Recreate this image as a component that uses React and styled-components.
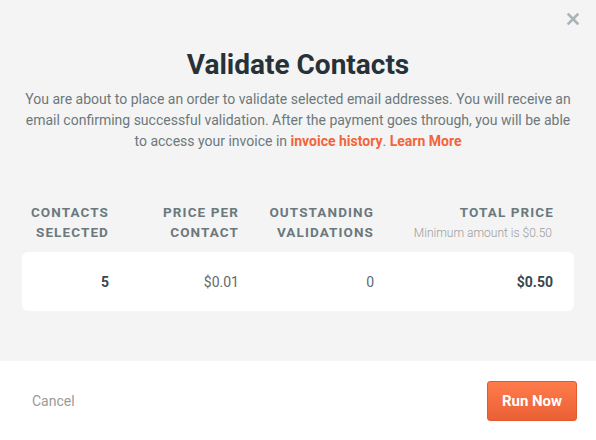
import React from "react";
import styled, { createGlobalStyle } from "styled-components";

const GlobalStyle = createGlobalStyle`
  html, body {
    margin: 0;
    padding: 0;
    background: #ffffff;
  }
  body {
    font-family: Roboto, "Liberation Sans", Arial, sans-serif;
  }
`;

const Modal = styled.div`
  width: 596px;
  height: 440px;
  display: flex;
  flex-direction: column;
  position: relative;
  overflow: hidden;
`;

const Body = styled.div`
  background: #f4f4f4;
  height: 361px;
  box-sizing: border-box;
  padding: 48px 22px 0;
  display: flex;
  flex-direction: column;
  align-items: stretch;
`;

const CloseButton = styled.button`
  position: absolute;
  top: 13px;
  right: 17px;
  width: 12px;
  height: 12px;
  padding: 0;
  border: 0;
  background: transparent;
  cursor: pointer;
  display: flex;
  color: #a9b4b7;
`;

const Title = styled.h1`
  margin: 0;
  font-size: 28px;
  line-height: 34px;
  font-weight: 700;
  color: #263238;
  text-align: center;
`;

const Description = styled.p`
  margin: 7px 0 0;
  font-size: 14px;
  line-height: 21px;
  color: #6d787b;
  text-align: center;
`;

const Link = styled.a`
  color: #f2643a;
  font-weight: 700;
  text-decoration: none;
`;

const Grid = styled.div`
  display: grid;
  grid-template-columns: 107px 130px 135px 1fr;
`;

const HeaderRow = styled(Grid)`
  margin-top: 50px;
`;

const HeadCell = styled.div`
  padding-right: 20px;
  text-align: right;
  font-size: 13.5px;
  line-height: 20px;
  font-weight: 700;
  letter-spacing: 1.1px;
  text-transform: uppercase;
  color: #6b797d;

  &:last-child {
    padding-right: 20px;
  }
`;

const HeadNote = styled.div`
  margin-right: 2px;
  font-size: 12px;
  line-height: 22px;
  font-weight: 300;
  letter-spacing: 0;
  text-transform: none;
  color: #9c9c9c;
`;

const Card = styled(Grid)`
  margin-top: 8px;
  height: 59px;
  background: #ffffff;
  border-radius: 6px;
  align-items: center;
`;

const Cell = styled.div`
  padding-right: 20px;
  text-align: right;
  font-size: 14px;
  font-weight: ${(p) => (p.$bold ? 700 : 400)};
  color: ${(p) => (p.$bold ? "#37474f" : "#5f6a6d")};

  &:last-child {
    padding-right: 21px;
  }
`;

const Footer = styled.div`
  flex: 1;
  background: #ffffff;
  display: flex;
  align-items: center;
  justify-content: space-between;
  padding: 0 19px 0 32px;
`;

const CancelButton = styled.button`
  border: 0;
  background: transparent;
  padding: 0;
  font-family: inherit;
  font-size: 14px;
  color: #9a9a9a;
  cursor: pointer;
`;

const RunButton = styled.button`
  width: 90px;
  height: 40px;
  border: 1px solid #e0592f;
  border-radius: 3px;
  background: linear-gradient(#ff7b4b, #ea6035);
  color: #ffffff;
  font-family: inherit;
  font-size: 15px;
  font-weight: 700;
  cursor: pointer;
`;

const columns = [
  { head: ["Contacts", "Selected"], value: "5", bold: true },
  { head: ["Price per", "Contact"], value: "$0.01" },
  { head: ["Outstanding", "Validations"], value: "0" },
  { head: ["Total Price"], note: "Minimum amount is $0.50", value: "$0.50", bold: true },
];

const App = () => {
  return (
    <Modal>
      <GlobalStyle />
      <CloseButton aria-label="Close">
        <svg width="12" height="12" viewBox="0 0 12 12">
          <path
            d="M1.5 1.5 L10.5 10.5 M10.5 1.5 L1.5 10.5"
            stroke="currentColor"
            strokeWidth="2.6"
            strokeLinecap="square"
          />
        </svg>
      </CloseButton>
      <Body>
        <Title>Validate Contacts</Title>
        <Description>
          You are about to place an order to validate selected email addresses. You will
          receive an email confirming successful validation. After the payment goes
          through, you will be able to access your invoice in{" "}
          <Link href="#">invoice history</Link>. <Link href="#">Learn More</Link>
        </Description>
        <HeaderRow>
          {columns.map((col) => (
            <HeadCell key={col.head.join(" ")}>
              {col.head.map((line) => (
                <div key={line}>{line}</div>
              ))}
              {col.note && <HeadNote>{col.note}</HeadNote>}
            </HeadCell>
          ))}
        </HeaderRow>
        <Card>
          {columns.map((col) => (
            <Cell key={col.head.join(" ")} $bold={col.bold}>
              {col.value}
            </Cell>
          ))}
        </Card>
      </Body>
      <Footer>
        <CancelButton>Cancel</CancelButton>
        <RunButton>Run Now</RunButton>
      </Footer>
    </Modal>
  );
};

export default App;
